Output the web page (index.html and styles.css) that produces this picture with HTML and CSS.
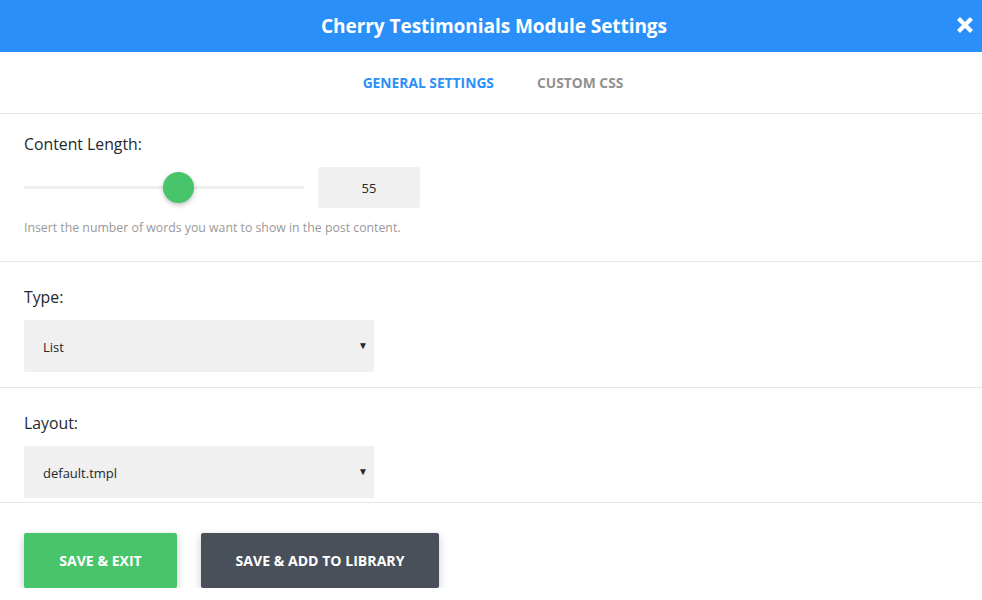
FILE: index.html
```html
<!DOCTYPE html>
<html>
<head>
<meta charset="utf-8">
<link rel="stylesheet" href="styles.css">
</head>
<body>
<div class="modal">
  <header class="head">
    <h1 class="title">Cherry Testimonials Module Settings</h1>
    <span class="close" aria-label="close">
      <svg width="16" height="16" viewBox="0 0 16 16"><path d="M3 3 L13 13 M13 3 L3 13" stroke="#fff" stroke-width="4.2" stroke-linecap="square"/></svg>
    </span>
  </header>
  <nav class="tabs">
    <span class="tab active">GENERAL SETTINGS</span>
    <span class="tab">CUSTOM CSS</span>
  </nav>
  <section class="field first">
    <div class="label">Content Length:</div>
    <div class="range-row">
      <div class="track"><span class="thumb"></span></div>
      <div class="num">55</div>
    </div>
    <div class="help">Insert the number of words you want to show in the post content.</div>
  </section>
  <section class="field">
    <div class="label">Type:</div>
    <div class="select"><span>List</span><span class="arrow">▼</span></div>
  </section>
  <section class="field">
    <div class="label">Layout:</div>
    <div class="select"><span>default.tmpl</span><span class="arrow">▼</span></div>
  </section>
  <footer class="actions">
    <button class="btn green">SAVE &amp; EXIT</button>
    <button class="btn dark">SAVE &amp; ADD TO LIBRARY</button>
  </footer>
</div>
</body>
</html>
```
FILE: styles.css
```css
html, body { margin: 0; padding: 0; background: #fff; }
body { font-family: "Open Sans", "Noto Sans", sans-serif; color: #23282d; }
.modal { width: 982px; }
.head {
  height: 52px; background: #2b8ffa; display: flex; align-items: center; justify-content: center; position: relative;
  padding-left: 6px; box-sizing: border-box;
}
.title { margin: 0; color: #fff; font-size: 19.1px; font-weight: 700; letter-spacing: -0.1px; line-height: 24px; }
.close { position: absolute; right: 9px; top: 17px; width: 16px; height: 16px; display: block; }
.close svg { display: block; }
.tabs {
  border-bottom: 1px solid #e6e6e6; display: flex; justify-content: center; align-items: center; gap: 43px;
  padding-left: 4px; box-sizing: border-box; height: 62px;
}
.tab { font-size: 13.8px; font-weight: 700; color: #919191; line-height: 18px; }
.tab.active { color: #2b8ffa; }
.field { padding: 20px 24px 14px; border-bottom: 1px solid #e6e6e6; }
.field.first { padding-top: 20px; padding-bottom: 25px; }
.label { font-size: 15.8px; line-height: 20px; color: #23282d; margin-bottom: 13px; }
.range-row { display: flex; align-items: center; gap: 14px; }
.track { width: 280px; height: 3px; background: #eeeeee; position: relative; }
.thumb {
  position: absolute; left: 139px; top: -14px; width: 31px; height: 31px; border-radius: 50%;
  background: #48c56a; box-shadow: 0 2px 5px rgba(0,0,0,0.25);
}
.num {
  width: 102px; height: 41px; background: #f0f0f0; border-radius: 2px; display: flex; align-items: center; justify-content: center;
  font-size: 13px; color: #23282d;
}
.help { font-size: 12.3px; color: #999; margin-top: 12px; line-height: 16px; }
.select {
  width: 350px; height: 52px; background: #f0f0f0; border-radius: 2px; display: flex; align-items: center; justify-content: space-between;
  padding: 0 6px 0 19px; box-sizing: border-box; font-size: 13px; color: #23282d;
}
.select span:first-child { padding-top: 2px; }
.arrow { font-size: 10px; color: #23282d; margin-top: -2px; }
.field:nth-of-type(2) { padding-top: 25px; padding-bottom: 15px; }
.field:nth-of-type(3) { padding-top: 25px; padding-bottom: 4px; }
.actions { padding: 30px 24px 0; display: flex; gap: 24px; }
.btn {
  height: 55px; border: none; border-radius: 2px; color: #fff; font-family: inherit; font-size: 14.1px; font-weight: 700;
  box-shadow: 0 3px 8px rgba(0,0,0,0.22); padding: 0;
}
.green { background: #48c56a; width: 153px; }
.dark { background: #4a5059; width: 238px; }
```
